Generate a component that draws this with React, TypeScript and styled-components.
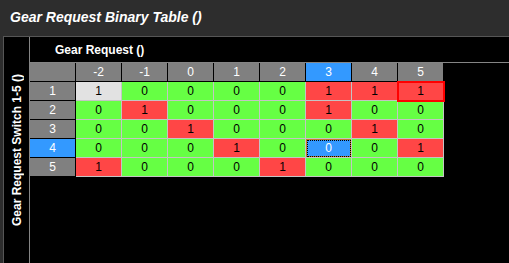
import { Fragment } from 'react';
import styled, { createGlobalStyle, css } from 'styled-components';

const GlobalStyle = createGlobalStyle`
  html, body {
    margin: 0;
    padding: 0;
    background: #2d2d2d;
    font-family: "Liberation Sans", Arial, sans-serif;
  }
  #root {
    width: 509px;
    height: 263px;
    overflow: hidden;
  }
`;

const Window = styled.div`
  display: flex;
  flex-direction: column;
  width: 509px;
  height: 263px;
  background: #2d2d2d;
`;

const TitleBar = styled.div`
  flex-shrink: 0;
  height: 36px;
  padding-left: 10px;
  display: flex;
  align-items: center;
  box-sizing: border-box;
  padding-bottom: 2px;
`;

const Title = styled.h1`
  margin: 0;
  font-size: 14px;
  font-weight: 700;
  font-style: italic;
  color: #ffffff;
`;

const Panel = styled.div`
  flex: 1;
  display: flex;
  margin-left: 3px;
  background: #000;
  border-top: 1px solid #565656;
  border-left: 1px solid #565656;
  min-height: 0;
`;

const Gutter = styled.div`
  width: 25px;
  flex-shrink: 0;
  border-right: 1px solid #858585;
  display: flex;
  align-items: center;
  justify-content: center;
`;

const AxisLabel = styled.span`
  writing-mode: vertical-rl;
  transform: rotate(180deg);
  font-size: 12px;
  font-weight: 700;
  color: #fff;
  white-space: nowrap;
`;

const Main = styled.div`
  flex: 1;
  display: flex;
  flex-direction: column;
`;

const AxisHeader = styled.div`
  height: 25px;
  border-bottom: 1px solid #858585;
  display: flex;
  align-items: center;
  padding-left: 25px;
  font-size: 12px;
  font-weight: 700;
  color: #fff;
`;

const Grid = styled.div`
  display: grid;
  grid-template-columns: repeat(9, 46px);
  grid-auto-rows: 19px;
  align-self: flex-start;
`;

type Tone = 'head' | 'active' | 'on' | 'off' | 'blank' | 'cursor';

const toneColors: Record<Tone, string> = {
  head: '#808080',
  active: '#3399ff',
  on: '#ff4646',
  off: '#66ff44',
  blank: '#e2e2e2',
  cursor: '#3399ff',
};

const Cell = styled.div<{ $tone: Tone; $header?: boolean; $picked?: boolean }>`
  box-sizing: border-box;
  position: relative;
  display: flex;
  align-items: center;
  justify-content: center;
  font-size: 12px;
  background: ${(p) => toneColors[p.$tone]};
  color: ${(p) => (p.$header || p.$tone === 'cursor' ? '#fff' : '#000')};
  border-right: 1px solid ${(p) => (p.$header ? '#000' : '#c4c4c4')};
  border-bottom: 1px solid ${(p) => (p.$header ? '#000' : '#c4c4c4')};
  ${(p) =>
    p.$tone === 'cursor' &&
    css`
      box-shadow: inset 0 0 0 1px #c8782a;
      outline: 1px dotted #000;
      outline-offset: -2px;
    `}
  ${(p) =>
    p.$picked &&
    css`
      outline: 2px solid #ff0000;
      outline-offset: -1px;
      z-index: 1;
    `}
`;

const columns = [-2, -1, 0, 1, 2, 3, 4, 5];
const rows = [1, 2, 3, 4, 5];
const values = [
  [1, 0, 0, 0, 0, 1, 1, 1],
  [0, 1, 0, 0, 0, 1, 0, 0],
  [0, 0, 1, 0, 0, 0, 1, 0],
  [0, 0, 0, 1, 0, 0, 0, 1],
  [1, 0, 0, 0, 1, 0, 0, 0],
];

const ACTIVE_COL = 5;
const ACTIVE_ROW = 3;

export default function App() {
  return (
    <>
      <GlobalStyle />
      <Window>
        <TitleBar>
          <Title>Gear Request Binary Table ()</Title>
        </TitleBar>
        <Panel>
          <Gutter>
            <AxisLabel>Gear Request Switch 1-5 ()</AxisLabel>
          </Gutter>
          <Main>
            <AxisHeader>Gear Request ()</AxisHeader>
            <Grid>
              <Cell $tone="head" $header />
              {columns.map((c, i) => (
                <Cell key={c} $tone={i === ACTIVE_COL ? 'active' : 'head'} $header>
                  {c}
                </Cell>
              ))}
              {rows.map((r, ri) => (
                <Fragment key={r}>
                  <Cell $tone={ri === ACTIVE_ROW ? 'active' : 'head'} $header>
                    {r}
                  </Cell>
                  {values[ri].map((v, ci) => {
                    let tone: Tone = v ? 'on' : 'off';
                    if (ri === 0 && ci === 0) tone = 'blank';
                    if (ri === ACTIVE_ROW && ci === ACTIVE_COL) tone = 'cursor';
                    return (
                      <Cell key={ci} $tone={tone} $picked={ri === 0 && ci === 7}>
                        {v}
                      </Cell>
                    );
                  })}
                </Fragment>
              ))}
            </Grid>
          </Main>
        </Panel>
      </Window>
    </>
  );
}
